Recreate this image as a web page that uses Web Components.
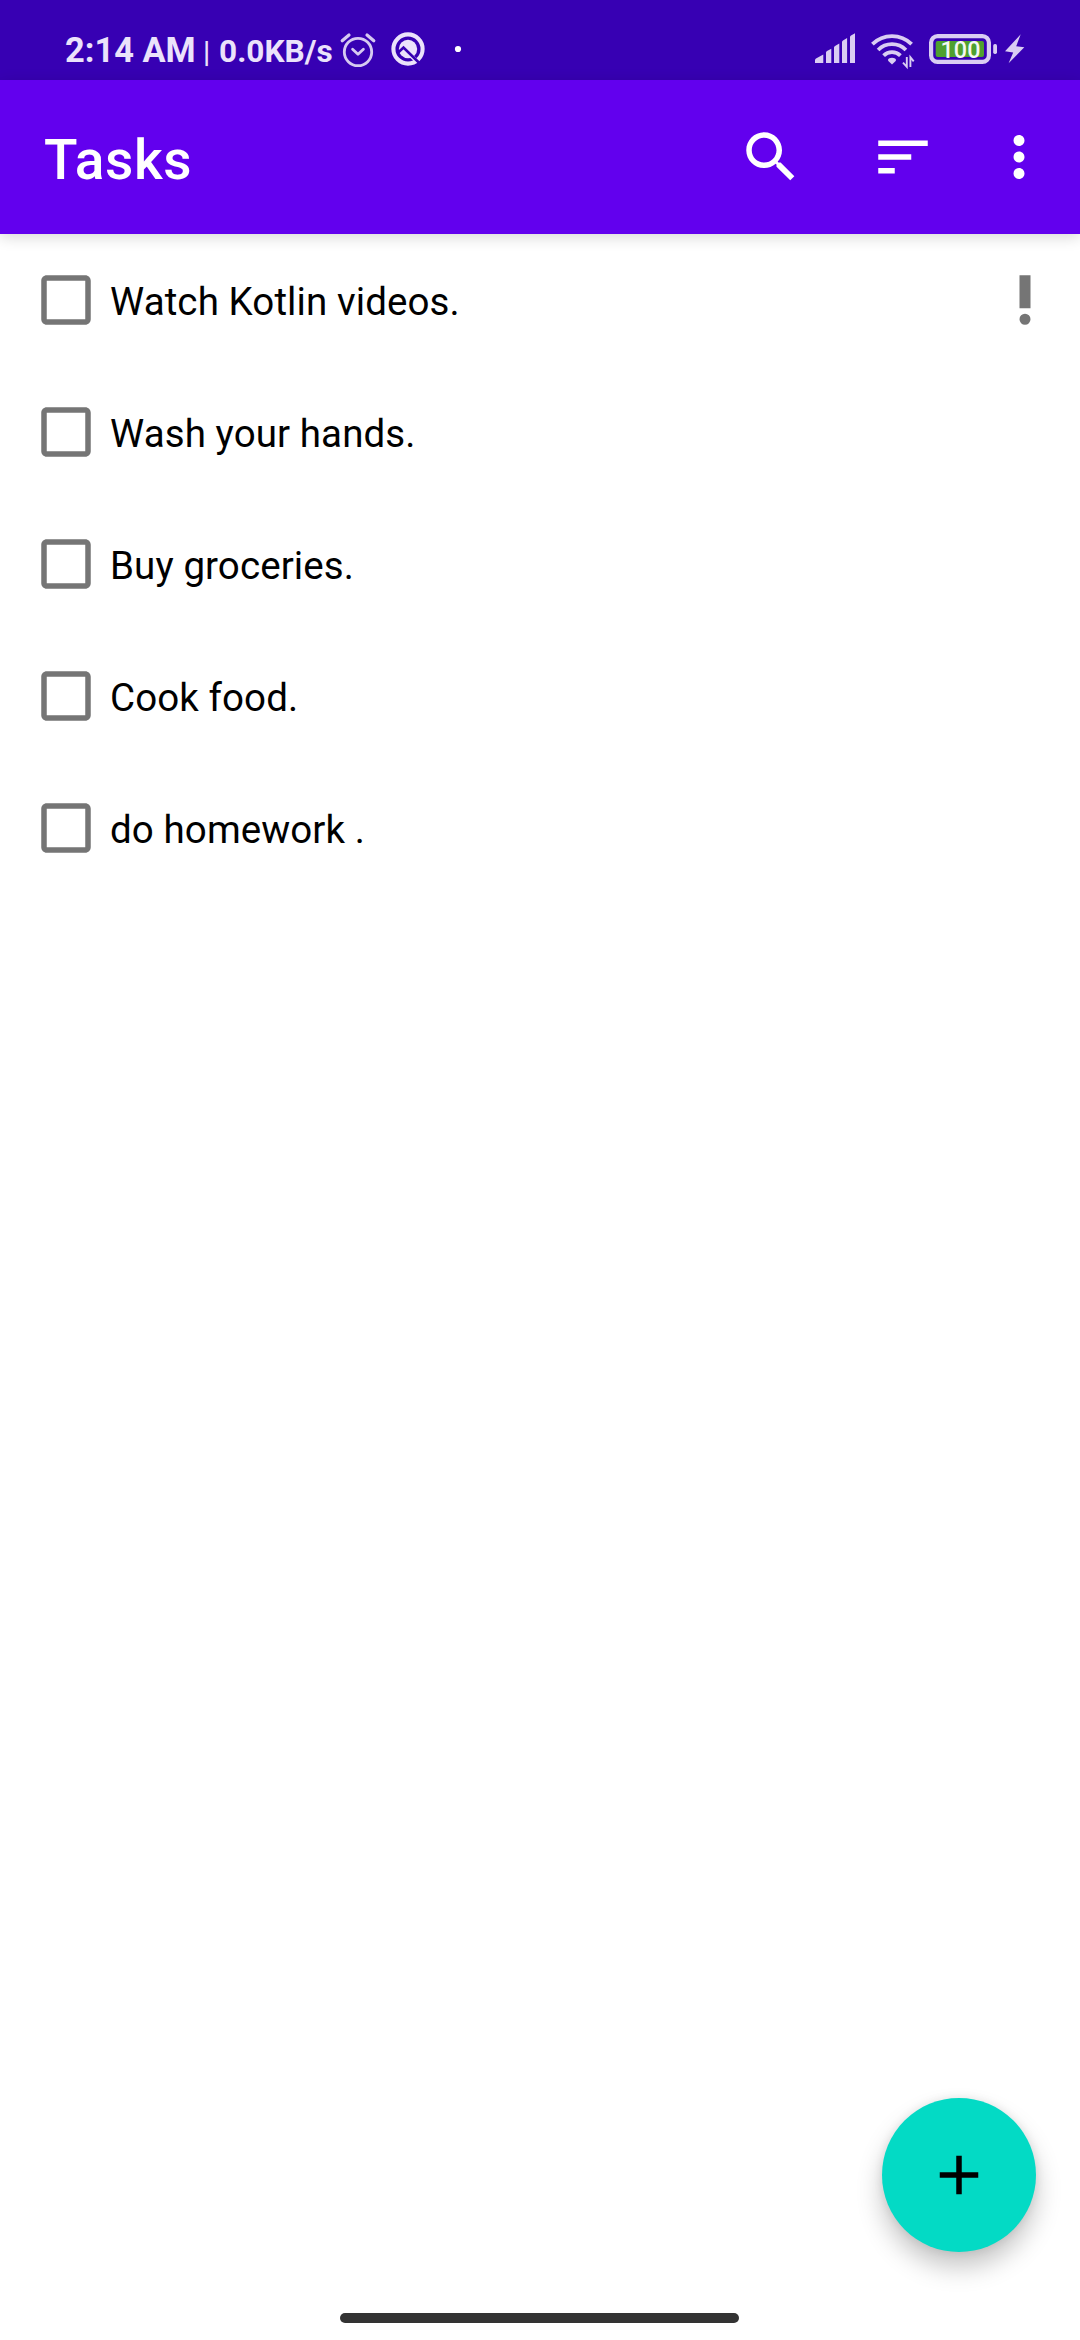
<!DOCTYPE html>
<html lang="en">
<head>
<meta charset="utf-8">
<title>Tasks</title>
<style>
html, body { margin: 0; height: 100%; background: #fff; }
body { font-family: Roboto, "Liberation Sans", sans-serif; }
</style>
</head>
<body>
<task-app></task-app>
<script>
function define(name, html, setup) {
  const tpl = document.createElement('template');
  tpl.innerHTML = html;
  customElements.define(name, class extends HTMLElement {
    constructor() {
      super();
      this.attachShadow({ mode: 'open' }).append(tpl.content.cloneNode(true));
    }
    connectedCallback() { if (setup) setup(this); }
  });
}

const ICONS = {
  search: 'M15.5 14h-.79l-.28-.27C15.41 12.59 16 11.11 16 9.5 16 5.91 13.09 3 9.5 3S3 5.91 3 9.5 5.91 16 9.5 16c1.61 0 3.09-.59 4.23-1.57l.27.28v.79l5 4.99L20.49 19l-4.99-5zm-6 0C7.01 14 5 11.99 5 9.5S7.01 5 9.5 5 14 7.01 14 9.5 11.99 14 9.5 14z',
  sort: 'M3 18h6v-2H3v2zM3 6v2h18V6H3zm0 7h12v-2H3v2z',
  more: 'M12 8c1.1 0 2-.9 2-2s-.9-2-2-2-2 .9-2 2 .9 2 2 2zm0 2c-1.1 0-2 .9-2 2s.9 2 2 2 2-.9 2-2-.9-2-2-2zm0 6c-1.1 0-2 .9-2 2s.9 2 2 2 2-.9 2-2-.9-2-2-2z',
  checkbox: 'M19 5v14H5V5h14m0-2H5c-1.1 0-2 .9-2 2v14c0 1.1.9 2 2 2h14c1.1 0 2-.9 2-2V5c0-1.1-.9-2-2-2z',
  priority: 'M10 3h4v12h-4zM12 17a2 2 0 1 0 0 4a2 2 0 1 0 0-4z',
  add: 'M19 13h-6v6h-2v-6H5v-2h6V5h2v6h6v2z'
};

define('md-icon', `
<style>:host{display:block;width:66px;height:66px;flex:none}svg{display:block}</style>
<svg width="66" height="66" viewBox="0 0 24 24" fill="currentColor"><path/></svg>`,
  el => el.shadowRoot.querySelector('path').setAttribute('d', ICONS[el.getAttribute('name')]));

define('status-battery', `
<style>
:host{display:grid;width:70px;height:80px}
svg,span{grid-area:1/1}
span{width:62px;text-align:center;align-self:start;line-height:101px;height:80px;font-size:23.4px;font-weight:500;color:#f4f8f2;padding-left:1px;box-sizing:border-box}
</style>
<svg width="70" height="80" viewBox="929 0 70 80">
  <rect x="931.1" y="36.1" width="57.8" height="25.8" rx="6.5" fill="none" stroke="#dacdf3" stroke-width="4.2"/>
  <rect x="935.7" y="41" width="48.3" height="16" rx="2" fill="#4fa02f"/>
  <rect x="993.2" y="44" width="3.8" height="10" rx="1.7" fill="#dacdf3"/>
</svg>
<span>100</span>`);

define('status-bar', `
<style>
:host{display:flex;justify-content:space-between;height:80px;background:#3700b3;color:#ebe2fb;font-weight:700;line-height:100px}
.side{display:flex;height:80px}
.left{padding-left:65px}
.texts{display:flex;align-items:baseline;width:271px;white-space:nowrap}
.time{width:138px;font-size:34.4px}
.sep{width:16px;font-size:29px;font-weight:500}
.net{font-size:31.6px}
svg{display:block}
.right{padding-right:52px}
</style>
<div class="side left">
  <div class="texts"><span class="time">2:14 AM</span><span class="sep">|</span><span class="net">0.0KB/s</span></div>
  <svg width="48" height="80" viewBox="336 0 48 80" fill="none" stroke="#d6c9f1" stroke-width="2.8" stroke-linecap="round" stroke-linejoin="round">
    <circle cx="358" cy="52" r="13.7"/>
    <path d="M342.2 40.8L349 35M367 35l6.8 5.8" stroke-width="3.2"/>
    <path d="M352.6 49.3l5.4 5 5.4-5"/>
  </svg>
  <svg width="56" height="80" viewBox="384 0 56 80">
    <circle cx="408" cy="49" r="14.6" fill="none" stroke="#ebe2fb" stroke-width="4.1"/>
    <circle cx="408" cy="49" r="9.2" fill="#ebe2fb"/>
    <path d="M409 54l6.5 6" stroke="#ebe2fb" stroke-width="4"/>
    <path d="M398.2 52.5l5.3-5 16.3 16" fill="none" stroke="#3700b3" stroke-width="2.6"/>
  </svg>
  <svg width="30" height="80" viewBox="440 0 30 80"><circle cx="458" cy="49" r="3.1" fill="#fff"/></svg>
</div>
<div class="side right">
  <svg width="50" height="80" viewBox="812 0 50 80" fill="#dacdf3">
    <path d="M815 63v-2.6q0-1.2 1-1.8l7.3-4V63zM826 63V52.6q0-1 1-1.6l4.3-2.2V63zM834 63V47.5q0-1 1-1.6l4.3-2.4V63zM842 63V42q0-1 1-1.6l4.1-2.3V63zM850 63V37q0-1 1-1.6l4-2.2V63z"/>
  </svg>
  <svg width="67" height="80" viewBox="862 0 67 80" fill="none" stroke="#dacdf3" stroke-width="3.8">
    <path d="M872.4 44.2a27.8 27.8 0 0 1 39.2 0M878.1 50a19.6 19.6 0 0 1 27.8 0M883.6 55.7a11.8 11.8 0 0 1 16.8 0"/>
    <path d="M892 64.4l-3.7-3.4q-1-1.3.6-2.4q3.1-1.6 6.2 0q1.6 1.1.6 2.4z" fill="#dacdf3" stroke="none"/>
    <path d="M906.8 57v9.8l-3.8-4.2M910.4 67v-9.8l3.3 4.2" stroke-width="1.9"/>
  </svg>
  <status-battery></status-battery>
  <svg width="29" height="80" viewBox="999 0 29 80" fill="#dacdf3"><path d="M1020.7 34.3L1005 51.3l8.2 1.2-4.6 10.8L1024.3 47.3l-8.1-1z"/></svg>
</div>`);

define('app-bar', `
<style>
:host{display:flex;align-items:center;justify-content:space-between;height:154px;padding:0 28px 0 44px;box-sizing:border-box;background:#6200ee;color:#fff;position:relative;z-index:1;box-shadow:0 3px 14px rgba(0,0,0,.16)}
h1{margin:0;padding-top:6px;font-size:55px;line-height:66px;font-weight:500;letter-spacing:.69px}
.actions{display:flex;gap:66px}
.actions ::slotted(:last-child){margin-left:-16px}
</style>
<h1><slot></slot></h1>
<div class="actions"><slot name="action"></slot></div>`);

define('task-item', `
<style>
:host{display:flex;align-items:center;height:132px;padding:0 22px 0 33px;color:#000;font-size:38.5px;letter-spacing:.1px}
md-icon{color:#757575}
span{flex:1;padding:4px 0 0 11px;line-height:46px}
.flag{display:none}
:host([important]) .flag{display:block}
</style>
<md-icon name="checkbox"></md-icon><span><slot></slot></span><md-icon class="flag" name="priority"></md-icon>`);

define('fab-button', `
<style>
:host{display:flex;align-items:center;justify-content:center;width:154px;height:154px;border-radius:50%;background:#03dac5;color:#000;box-shadow:0 15px 26px rgba(0,0,0,.23),0 0 10px rgba(0,0,0,.09)}
</style>
<md-icon name="add"></md-icon>`);

define('task-app', `
<style>
:host{display:flex;flex-direction:column;height:2340px;width:1080px;background:#fff;overflow:hidden}
main{flex:1}
footer{display:flex;flex-direction:column;height:242px}
fab-button{align-self:flex-end;margin-right:44px}
.home{align-self:center;width:399px;height:10px;border-radius:5px;background:#333;margin-top:61px;margin-right:1px}
</style>
<status-bar></status-bar>
<app-bar>Tasks<md-icon slot="action" name="search"></md-icon><md-icon slot="action" name="sort"></md-icon><md-icon slot="action" name="more"></md-icon></app-bar>
<main>
  <task-item important>Watch Kotlin videos.</task-item>
  <task-item>Wash your hands.</task-item>
  <task-item>Buy groceries.</task-item>
  <task-item>Cook food.</task-item>
  <task-item>do homework .</task-item>
</main>
<footer><fab-button></fab-button><div class="home"></div></footer>`);
</script>
</body>
</html>
